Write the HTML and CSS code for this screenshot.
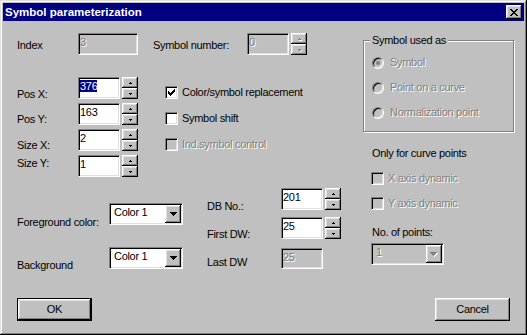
FILE: index.html
```html
<!DOCTYPE html>
<html lang="en">
<head>
    <meta charset="UTF-8">
    <meta name="viewport" content="width=device-width, initial-scale=1.0">
    <title>Symbol parameterization</title>
    <link rel="stylesheet" href="styles.css">
</head>
<body>
    <div class="window">
        <div class="titlebar">
            <span class="title">Symbol parameterization</span>
            <button class="close" aria-label="Close">
                <svg width="8" height="7" viewBox="0 0 8 7" shape-rendering="crispEdges">
                    <path d="M0 0h2v1H0zM6 0h2v1H6zM1 1h2v1H1zM5 1h2v1H5zM2 2h4v1H2zM3 3h2v1H3zM2 4h4v1H2zM1 5h2v1H1zM5 5h2v1H5zM0 6h2v1H0zM6 6h2v1H6z" fill="#000"/>
                </svg>
            </button>
        </div>
        <div class="client">
            <div class="main">
                <div class="left">
                    <div class="top-row">
                        <span class="lbl lbl-index">Index</span>
                        <div class="edit disabled w-index">3</div>
                        <span class="lbl lbl-symnum">Symbol number:</span>
                        <div class="edit disabled w-small">0</div>
                        <div class="spin disabled">
                            <div class="spin-btn up"></div>
                            <div class="spin-btn down"></div>
                        </div>
                    </div>

                    <div class="mid">
                        <div class="pos-labels">
                            <span class="lbl">Pos X:</span>
                            <span class="lbl">Pos Y:</span>
                            <span class="lbl">Size X:</span>
                            <span class="lbl">Size Y:</span>
                        </div>
                        <div class="pos-fields">
                            <div class="spin-row">
                                <div class="edit w-small"><span class="sel">376</span></div>
                                <div class="spin"><div class="spin-btn up"></div><div class="spin-btn down"></div></div>
                            </div>
                            <div class="spin-row">
                                <div class="edit w-small">163</div>
                                <div class="spin"><div class="spin-btn up"></div><div class="spin-btn down"></div></div>
                            </div>
                            <div class="spin-row">
                                <div class="edit w-small">2</div>
                                <div class="spin"><div class="spin-btn up"></div><div class="spin-btn down"></div></div>
                            </div>
                            <div class="spin-row">
                                <div class="edit w-small">1</div>
                                <div class="spin"><div class="spin-btn up"></div><div class="spin-btn down"></div></div>
                            </div>
                        </div>
                        <div class="checks">
                            <div class="check">
                                <span class="box">
                                    <svg width="7" height="7" viewBox="0 0 7 7" shape-rendering="crispEdges">
                                        <path d="M0 2h1v3H0zM1 3h1v3H1zM2 4h1v3H2zM3 3h1v3H3zM4 2h1v3H4zM5 1h1v3H5zM6 0h1v3H6z" fill="#000"/>
                                    </svg>
                                </span>
                                Color/symbol replacement
                            </div>
                            <div class="check"><span class="box"></span>Symbol shift</div>
                            <div class="check disabled"><span class="box"></span>Ind.symbol control</div>
                        </div>
                    </div>

                    <div class="low">
                        <div class="colors">
                            <div class="combo-row fg">
                                <span class="lbl">Foreground color:</span>
                                <div class="combo">
                                    <span class="combo-text">Color 1</span>
                                    <span class="combo-btn">
                                        <svg width="7" height="4" viewBox="0 0 7 4" shape-rendering="crispEdges"><path d="M0 0h7v1H0zM1 1h5v1H1zM2 2h3v1H2zM3 3h1v1H3z" fill="#000"/></svg>
                                    </span>
                                </div>
                            </div>
                            <div class="combo-row bg">
                                <span class="lbl">Background</span>
                                <div class="combo">
                                    <span class="combo-text">Color 1</span>
                                    <span class="combo-btn">
                                        <svg width="7" height="4" viewBox="0 0 7 4" shape-rendering="crispEdges"><path d="M0 0h7v1H0zM1 1h5v1H1zM2 2h3v1H2zM3 3h1v1H3z" fill="#000"/></svg>
                                    </span>
                                </div>
                            </div>
                        </div>
                        <div class="dw">
                            <div class="dw-row">
                                <span class="lbl">DB No.:</span>
                                <div class="edit w-small">201</div>
                                <div class="spin"><div class="spin-btn up"></div><div class="spin-btn down"></div></div>
                            </div>
                            <div class="dw-row">
                                <span class="lbl">First DW:</span>
                                <div class="edit w-small">25</div>
                                <div class="spin"><div class="spin-btn up"></div><div class="spin-btn down"></div></div>
                            </div>
                            <div class="dw-row">
                                <span class="lbl">Last DW</span>
                                <div class="edit disabled w-small short">25</div>
                            </div>
                        </div>
                    </div>
                </div>

                <div class="right">
                    <fieldset class="group">
                        <legend>Symbol used as</legend>
                        <div class="radios">
                            <div class="radio-row disabled"><span class="radio on"></span>Symbol</div>
                            <div class="radio-row disabled"><span class="radio"></span>Point on a curve</div>
                            <div class="radio-row disabled"><span class="radio"></span>Normalization point</div>
                        </div>
                    </fieldset>
                    <div class="caption curve">Only for curve points</div>
                    <div class="check disabled axis-x"><span class="box"></span>X axis dynamic</div>
                    <div class="check disabled axis-y"><span class="box"></span>Y axis dynamic</div>
                    <div class="caption points">No. of points:</div>
                    <div class="combo disabled points-combo">
                        <span class="combo-text">1</span>
                        <span class="combo-btn">
                            <svg width="8" height="5" viewBox="0 0 8 5" shape-rendering="crispEdges">
                                <path d="M1 1h7v1H1zM2 2h5v1H2zM3 3h3v1H3zM4 4h1v1H4z" fill="#fff"/>
                                <path d="M0 0h7v1H0zM1 1h5v1H1zM2 2h3v1H2zM3 3h1v1H3z" fill="#808080"/>
                            </svg>
                        </span>
                    </div>
                </div>
            </div>

            <div class="buttons">
                <button class="btn default">OK</button>
                <button class="btn">Cancel</button>
            </div>
        </div>
    </div>
</body>
</html>
```

FILE: styles.css
```css
* {
    box-sizing: border-box;
}
body {
    margin: 0;
    background: #c0c0c0;
    font-family: "Liberation Sans", Arial, sans-serif;
    font-size: 11px;
    line-height: 13px;
    letter-spacing: -0.3px;
    color: #000;
}

/* window frame + title */
.window {
    width: 527px;
    height: 335px;
    padding: 3px;
    background: #c0c0c0;
    display: flex;
    flex-direction: column;
    box-shadow: inset -1px -1px #000, inset 1px 1px #dfdfdf, inset -2px -2px #808080, inset 2px 2px #fff;
}
.titlebar {
    height: 18px;
    flex: none;
    background: #000080;
    color: #fff;
    display: flex;
    align-items: center;
    justify-content: space-between;
    padding: 0 2px;
}
.title {
    font-weight: bold;
    font-size: 11.5px;
    letter-spacing: 0;
}
.close {
    width: 16px;
    height: 14px;
    padding: 0;
    border: 0;
    display: flex;
    align-items: center;
    justify-content: center;
}

/* raised look shared by all buttons */
.close, .spin-btn, .combo-btn, .btn {
    background: #c0c0c0;
    box-shadow: inset -1px -1px #000, inset 1px 1px #fff, inset -2px -2px #808080, inset 2px 2px #dfdfdf;
}

.client {
    flex: 1;
    display: flex;
    flex-direction: column;
    padding: 12px 14px 11px 14px;
}
.main {
    display: flex;
}
.left {
    width: 346px;
    flex: none;
}
.right {
    width: 151px;
    flex: none;
}

.lbl {
    white-space: nowrap;
}
.disabled, .disabled .combo-text {
    color: #808080;
    text-shadow: 1px 1px 0 #fff;
}

/* edit boxes */
.edit {
    height: 22px;
    padding: 2px 1px;
    background: #fff;
    border: 1px solid;
    border-color: #808080 #fff #fff #808080;
    box-shadow: inset 1px 1px #000, inset -1px -1px #dfdfdf;
    white-space: nowrap;
}
.edit.disabled {
    background: #c0c0c0;
}
.w-index {
    width: 60px;
}
.w-small {
    width: 42px;
}
.edit.short {
    height: 21px;
}
.sel {
    background: #000080;
    color: #fff;
}

/* spinners */
.spin {
    width: 16px;
    margin-left: 2px;
    display: flex;
    flex-direction: column;
}
.spin-btn {
    height: 11px;
    display: flex;
    align-items: center;
    justify-content: center;
}
.spin-btn::after {
    content: '';
    width: 1px;
    height: 1px;
    background: #000;
}
.up::after {
    box-shadow: -1px 1px #000, 0 1px #000, 1px 1px #000;
}
.down::after {
    box-shadow: -1px 0 #000, 1px 0 #000, 0 1px #000;
}
.spin.disabled .spin-btn::after {
    background: #808080;
}
.spin.disabled .up::after {
    box-shadow: -1px 1px #808080, 0 1px #808080, 1px 1px #808080, 2px 2px #fff, 1px 2px #fff, 0 2px #fff;
}
.spin.disabled .down::after {
    box-shadow: -1px 0 #808080, 1px 0 #808080, 0 1px #808080, 2px 1px #fff, 1px 2px #fff;
}

/* top row */
.top-row {
    display: flex;
    height: 22px;
}
.lbl-index {
    width: 61px;
    margin-top: 6px;
}
.lbl-symnum {
    width: 94px;
    margin-left: 15px;
    margin-top: 6px;
}

/* position / size block */
.mid {
    display: flex;
    margin-top: 22px;
}
.pos-labels {
    width: 61px;
    display: flex;
    flex-direction: column;
}
.pos-labels .lbl:nth-child(1) { margin-top: 11px; }
.pos-labels .lbl:nth-child(2) { margin-top: 12px; }
.pos-labels .lbl:nth-child(3) { margin-top: 13px; }
.pos-labels .lbl:nth-child(4) { margin-top: 5px; }
.pos-fields {
    display: flex;
    flex-direction: column;
    gap: 4px;
}
.spin-row {
    display: flex;
}

/* checkboxes */
.checks {
    margin-left: 27px;
    margin-top: 9px;
    display: flex;
    flex-direction: column;
    gap: 13px;
}
.check {
    display: flex;
    align-items: center;
    height: 13px;
    white-space: nowrap;
}
.box {
    width: 13px;
    height: 13px;
    flex: none;
    margin-right: 4px;
    background: #fff;
    border: 1px solid;
    border-color: #808080 #fff #fff #808080;
    box-shadow: inset 1px 1px #000, inset -1px -1px #dfdfdf;
    display: flex;
    align-items: center;
    justify-content: center;
}
.check.disabled .box {
    background: #c0c0c0;
}

/* colours + data words */
.low {
    display: flex;
    margin-top: 11px;
}
.colors {
    width: 166px;
}
.combo-row {
    display: flex;
}
.combo-row .lbl {
    width: 92px;
}
.combo-row.fg {
    margin-top: 15px;
}
.combo-row.fg .lbl {
    margin-top: 13px;
}
.combo-row.bg {
    margin-top: 18px;
}
.combo-row.bg .lbl {
    margin-top: 12px;
}
.combo {
    width: 74px;
    height: 22px;
    padding: 1px;
    display: flex;
    background: #fff;
    border: 1px solid;
    border-color: #808080 #fff #fff #808080;
    box-shadow: inset 1px 1px #000, inset -1px -1px #dfdfdf;
}
.combo.disabled {
    background: #c0c0c0;
}
.combo-text {
    flex: 1;
    padding: 1px 0 0 3px;
    white-space: nowrap;
}
.combo-btn {
    width: 16px;
    height: 18px;
    flex: none;
    display: flex;
    align-items: center;
    justify-content: center;
}

.dw {
    margin-left: 24px;
    display: flex;
    flex-direction: column;
}
.dw-row {
    display: flex;
}
.dw-row .lbl {
    width: 74px;
}
.dw-row:nth-child(1) .lbl { margin-top: 12px; }
.dw-row:nth-child(2) { margin-top: 4px; }
.dw-row:nth-child(2) .lbl { margin-top: 11px; }
.dw-row:nth-child(3) { margin-top: 7px; }
.dw-row:nth-child(3) .lbl { margin-top: 8px; }

/* right column */
.group {
    margin: 1px 0 0 0;
    padding: 9px 8px 12px 8px;
    min-width: 0;
    border: 1px solid #808080;
    box-shadow: inset 1px 1px #fff, 1px 1px #fff;
}
.group legend {
    padding: 0 2px;
    margin-left: -2px;
    background: #c0c0c0;
}
.radios {
    display: flex;
    flex-direction: column;
    gap: 12px;
}
.radio-row {
    display: flex;
    align-items: center;
    height: 13px;
    white-space: nowrap;
}
.radio {
    width: 12px;
    height: 12px;
    margin-right: 6px;
    border-radius: 50%;
    border: 1px solid;
    border-color: #808080 #fff #fff #808080;
    box-shadow: inset 1px 1px #000, inset -1px -1px #dfdfdf;
    background: #c0c0c0;
    display: flex;
    align-items: center;
    justify-content: center;
}
.radio.on::after {
    content: '';
    width: 4px;
    height: 4px;
    border-radius: 50%;
    background: #808080;
}
.caption {
    padding-left: 9px;
}
.caption.curve {
    margin-top: 15px;
}
.right .check {
    margin-left: 8px;
}
.axis-x {
    margin-top: 12px;
}
.axis-y {
    margin-top: 12px;
}
.caption.points {
    margin-top: 16px;
}
.points-combo {
    width: 73px;
    margin-left: 8px;
    margin-top: 4px;
}

/* bottom buttons */
.buttons {
    margin-top: auto;
    display: flex;
    justify-content: space-between;
}
.btn {
    width: 75px;
    height: 23px;
    padding: 0;
    border: 0;
    font: inherit;
    letter-spacing: inherit;
    color: #000;
}
.btn.default {
    border: 1px solid #000;
}
```
